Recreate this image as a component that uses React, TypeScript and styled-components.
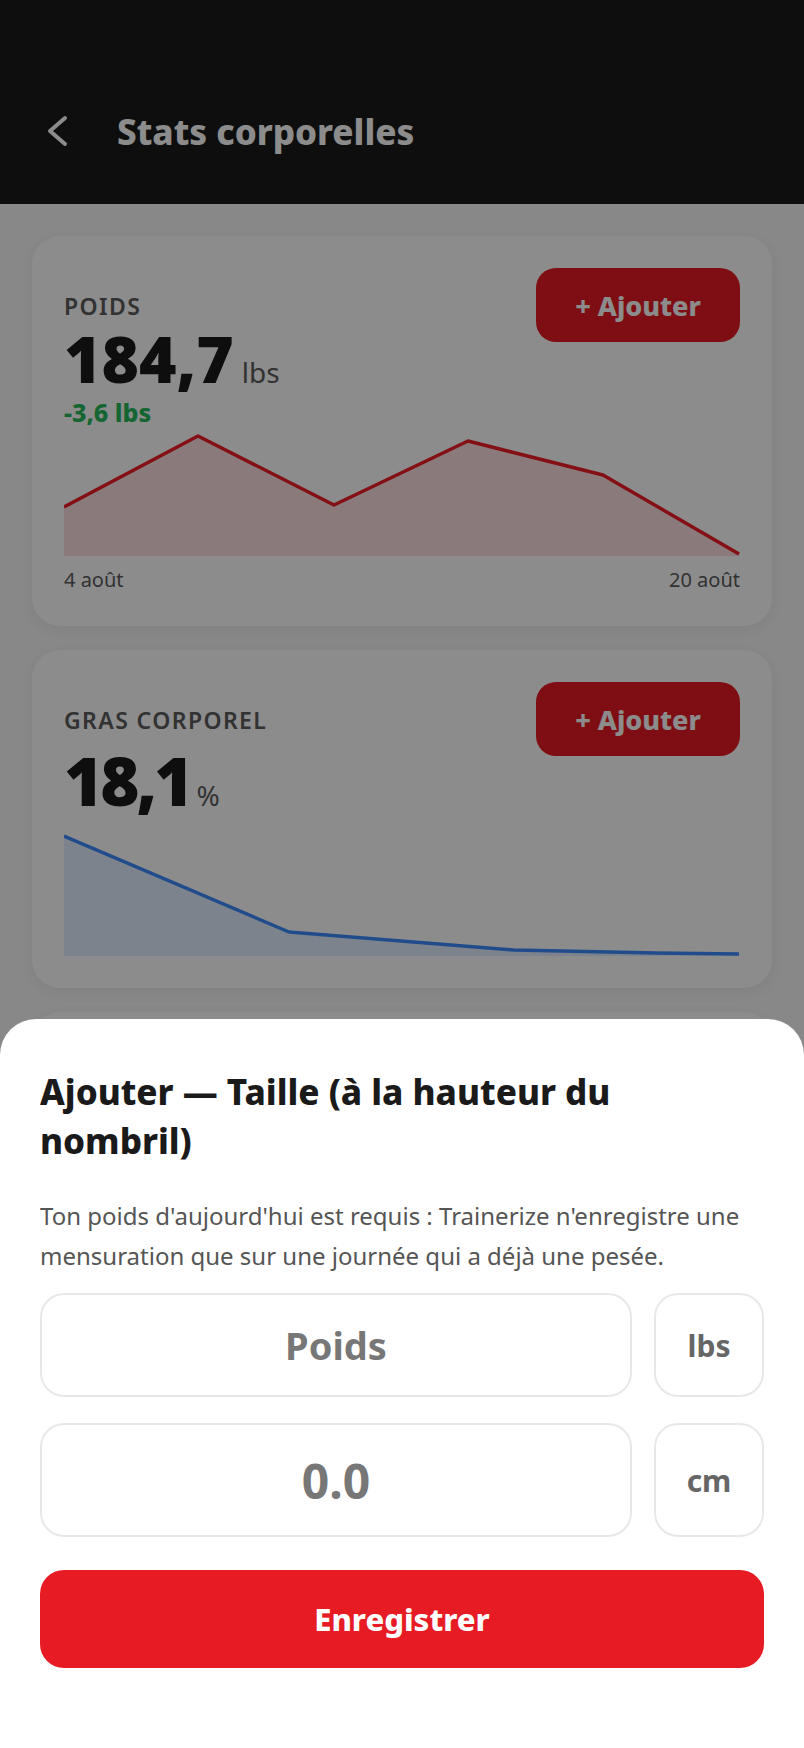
import React from "react";
import styled, { createGlobalStyle } from "styled-components";

const GlobalStyle = createGlobalStyle`
  * { box-sizing: border-box; }
  html, body { margin: 0; padding: 0; }
  body {
    background: #f7f7f7;
    font-family: "Noto Sans", "Open Sans", sans-serif;
    color: #1a1a1a;
  }
`;

const Screen = styled.div`
  min-height: 1748px;
  background: #f7f7f7;
`;

const TopBar = styled.header`
  height: 204px;
  background: #1a1a1a;
  display: flex;
  align-items: flex-end;
  padding: 0 0 44px 46px;
`;

const NavRow = styled.div`
  display: flex;
  align-items: center;
  gap: 47px;
  height: 58px;
`;

const BackButton = styled.button`
  display: flex;
  padding: 0;
  border: 0;
  background: none;
  color: #fff;
`;

const PageTitle = styled.h1`
  margin: 0;
  font-size: 35px;
  font-weight: 800;
  color: #fff;
`;

const Content = styled.main`
  display: flex;
  flex-direction: column;
  gap: 24px;
  padding: 32px;
`;

const Card = styled.section<{ $minHeight?: number }>`
  min-height: ${(p) => p.$minHeight ?? 0}px;
  background: #fff;
  border-radius: 28px;
  padding: 32px;
  box-shadow: 0 4px 14px rgba(0, 0, 0, 0.05);
`;

const CardTop = styled.div`
  display: flex;
  justify-content: space-between;
  align-items: flex-start;
`;

const Figures = styled.div`
  display: flex;
  flex-direction: column;
  padding-top: 25px;
`;

const Label = styled.div`
  font-size: 23px;
  line-height: 26px;
  font-weight: 600;
  letter-spacing: 1.4px;
  color: #5c5c5c;
`;

const ValueRow = styled.div<{ $gap: number }>`
  display: flex;
  align-items: baseline;
  margin-top: ${(p) => p.$gap}px;
`;

const Value = styled.span<{ $size: number; $track: number }>`
  font-size: ${(p) => p.$size}px;
  line-height: 1;
  font-weight: 900;
  letter-spacing: ${(p) => p.$track}px;
  color: #1a1a1a;
`;

const Unit = styled.span<{ $space: number }>`
  margin-left: ${(p) => p.$space}px;
  font-size: 28px;
  line-height: 1;
  color: #5c5c5c;
`;

const Delta = styled.div`
  margin-top: 8px;
  font-size: 25px;
  line-height: 26px;
  font-weight: 800;
  color: #26b95c;
`;

const AddButton = styled.button`
  width: 204px;
  height: 74px;
  border: 0;
  border-radius: 20px;
  background: #e61b24;
  color: #fff;
  font-family: inherit;
  font-size: 27px;
  font-weight: 800;
`;

const Chart = styled.svg`
  display: block;
  margin-top: 7px;
  width: 676px;
`;

const Dates = styled.div`
  display: flex;
  justify-content: space-between;
  margin-top: 10px;
  font-size: 20px;
  line-height: 28px;
  color: #5c5c5c;
`;

const Overlay = styled.div`
  position: fixed;
  inset: 0;
  background: rgba(0, 0, 0, 0.45);
`;

const Sheet = styled.div`
  position: fixed;
  left: 0;
  right: 0;
  bottom: 0;
  background: #fff;
  border-radius: 36px 36px 0 0;
  padding: 48px 40px 80px;
`;

const SheetTitle = styled.h2`
  margin: 0;
  max-width: 640px;
  font-size: 35px;
  line-height: 49px;
  font-weight: 800;
  color: #1a1a1a;
`;

const Notice = styled.p`
  margin: 31px 0 0;
  font-size: 24px;
  line-height: 40px;
  color: #555;
`;

const FieldRow = styled.div<{ $gap: number }>`
  display: grid;
  grid-template-columns: 1fr 110px;
  gap: 22px;
  margin-top: ${(p) => p.$gap}px;
`;

const NumberInput = styled.input<{ $size: number; $height: number }>`
  width: 100%;
  height: ${(p) => p.$height}px;
  border: 2px solid #e8e8e8;
  border-radius: 24px;
  background: #fff;
  text-align: center;
  font-family: inherit;
  font-size: ${(p) => p.$size}px;
  font-weight: 700;
  color: #1a1a1a;
  outline: none;
  &::placeholder {
    color: #777;
  }
`;

const UnitBox = styled.div`
  display: flex;
  align-items: center;
  justify-content: center;
  border: 2px solid #e8e8e8;
  border-radius: 24px;
  font-size: 30px;
  font-weight: 700;
  color: #666;
`;

const SaveButton = styled.button`
  display: block;
  width: 100%;
  height: 98px;
  margin-top: 33px;
  border: 0;
  border-radius: 24px;
  background: #e61b24;
  color: #fff;
  font-family: inherit;
  font-size: 31px;
  font-weight: 800;
`;

type Pt = [number, number];

function Sparkline({ points, height, color, fill }: { points: Pt[]; height: number; color: string; fill: string }) {
  const line = points.map(([x, y]) => `${x},${y}`).join(" ");
  const area = `0,${height} ${line} 676,${height}`;
  return (
    <Chart viewBox={`0 0 676 ${height}`} height={height}>
      <polygon points={area} fill={fill} />
      <polyline points={line} fill="none" stroke={color} strokeWidth={3.5} strokeLinejoin="round" />
    </Chart>
  );
}

const weightPts: Pt[] = [
  [0, 75],
  [134, 4],
  [270, 73],
  [404, 9],
  [539, 43],
  [675, 122],
];

const fatPts: Pt[] = [
  [0, 15],
  [225, 111],
  [450, 129],
  [592, 132],
  [675, 133],
];

export default function App() {
  return (
    <Screen>
      <GlobalStyle />
      <TopBar>
        <NavRow>
          <BackButton aria-label="Retour">
            <svg width="24" height="34" viewBox="0 0 24 34">
              <polyline points="19,4 4,17 19,30" fill="none" stroke="currentColor" strokeWidth="4" strokeLinecap="round" strokeLinejoin="round" />
            </svg>
          </BackButton>
          <PageTitle>Stats corporelles</PageTitle>
        </NavRow>
      </TopBar>

      <Content>
        <Card>
          <CardTop>
            <Figures>
              <Label>POIDS</Label>
              <ValueRow $gap={8}>
                <Value $size={64} $track={0}>184,7</Value>
                <Unit $space={8}>lbs</Unit>
              </ValueRow>
              <Delta>-3,6 lbs</Delta>
            </Figures>
            <AddButton>+ Ajouter</AddButton>
          </CardTop>
          <Sparkline points={weightPts} height={124} color="#f01d26" fill="rgba(230, 27, 36, 0.14)" />
          <Dates>
            <span>4 août</span>
            <span>20 août</span>
          </Dates>
        </Card>

        <Card>
          <CardTop>
            <Figures>
              <Label>GRAS CORPOREL</Label>
              <ValueRow $gap={14}>
                <Value $size={67} $track={-3}>18,1</Value>
                <Unit $space={6}>%</Unit>
              </ValueRow>
            </Figures>
            <AddButton>+ Ajouter</AddButton>
          </CardTop>
          <Sparkline points={fatPts} height={135} color="#3d8bff" fill="rgba(61, 139, 255, 0.15)" />
        </Card>

        {/* next measurement card, hidden under the sheet */}
        <Card $minHeight={300} />
      </Content>

      <Overlay />
      <Sheet>
        <SheetTitle>Ajouter — Taille (à la hauteur du nombril)</SheetTitle>
        <Notice>
          Ton poids d'aujourd'hui est requis : Trainerize n'enregistre une mensuration que sur une journée qui a déjà une pesée.
        </Notice>
        <FieldRow $gap={17}>
          <NumberInput $size={38} $height={104} placeholder="Poids" inputMode="decimal" />
          <UnitBox>lbs</UnitBox>
        </FieldRow>
        <FieldRow $gap={26}>
          <NumberInput $size={48} $height={114} placeholder="0.0" inputMode="decimal" />
          <UnitBox>cm</UnitBox>
        </FieldRow>
        <SaveButton>Enregistrer</SaveButton>
      </Sheet>
    </Screen>
  );
}
